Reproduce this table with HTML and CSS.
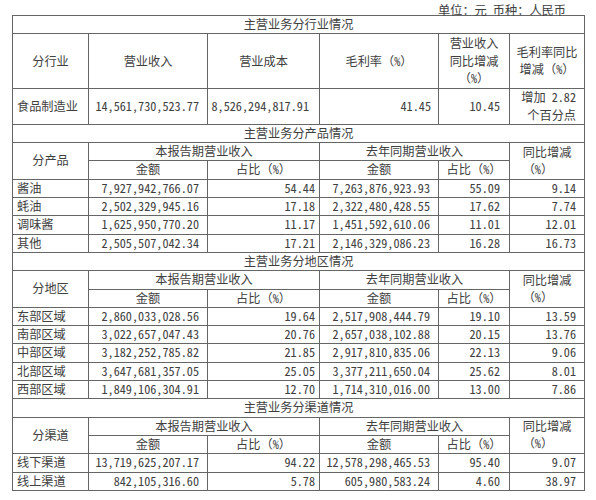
FILE: index.html
```html
<!DOCTYPE html>
<html lang="zh-CN">
<head>
<meta charset="utf-8">
<title>主营业务情况</title>
<link rel="stylesheet" href="styles.css">
</head>
<body>
<div class="page">
  <div class="unit">单位：元 币种：人民币</div>
  <table class="report">
    <colgroup>
      <col class="c1"><col class="c2"><col class="c3"><col class="c4"><col class="c5"><col class="c6">
    </colgroup>
    <tbody>
      <tr><td colspan="6" class="sec">主营业务分行业情况</td></tr>
      <tr class="hdr3">
        <td class="ctr">分行业</td>
        <td class="ctr">营业收入</td>
        <td class="ctr">营业成本</td>
        <td class="ctr">毛利率（%）</td>
        <td class="ctr">营业收入<br>同比增减<br>（%）</td>
        <td class="ctr">毛利率同比<br>增减（%）</td>
      </tr>
      <tr>
        <td class="lbl">食品制造业</td>
        <td class="num p8">14,561,730,523.77</td>
        <td class="num p10">8,526,294,817.91</td>
        <td class="num p7">41.45</td>
        <td class="num p9">10.45</td>
        <td class="num p8">增加 2.82<br>个百分点</td>
      </tr>

      <tr><td colspan="6" class="sec">主营业务分产品情况</td></tr>
      <tr>
        <td rowspan="2" class="ctr">分产品</td>
        <td colspan="2" class="ctr">本报告期营业收入</td>
        <td colspan="2" class="ctr">去年同期营业收入</td>
        <td rowspan="2" class="ctr"><span class="blk">同比增减<br>（%）</span></td>
      </tr>
      <tr>
        <td class="ctr">金额</td><td class="ctr">占比（%）</td>
        <td class="ctr">金额</td><td class="ctr">占比（%）</td>
      </tr>
      <tr><td class="lbl">酱油</td><td class="num p8">7,927,942,766.07</td><td class="num p4">54.44</td><td class="num p8">7,263,876,923.93</td><td class="num p9">55.09</td><td class="num p8">9.14</td></tr>
      <tr><td class="lbl">蚝油</td><td class="num p8">2,502,329,945.16</td><td class="num p4">17.18</td><td class="num p8">2,322,480,428.55</td><td class="num p9">17.62</td><td class="num p8">7.74</td></tr>
      <tr><td class="lbl">调味酱</td><td class="num p8">1,625,950,770.20</td><td class="num p4">11.17</td><td class="num p8">1,451,592,610.06</td><td class="num p9">11.01</td><td class="num p8">12.01</td></tr>
      <tr><td class="lbl">其他</td><td class="num p8">2,505,507,042.34</td><td class="num p4">17.21</td><td class="num p8">2,146,329,086.23</td><td class="num p9">16.28</td><td class="num p8">16.73</td></tr>

      <tr><td colspan="6" class="sec">主营业务分地区情况</td></tr>
      <tr>
        <td rowspan="2" class="ctr">分地区</td>
        <td colspan="2" class="ctr">本报告期营业收入</td>
        <td colspan="2" class="ctr">去年同期营业收入</td>
        <td rowspan="2" class="ctr"><span class="blk">同比增减<br>（%）</span></td>
      </tr>
      <tr>
        <td class="ctr">金额</td><td class="ctr">占比（%）</td>
        <td class="ctr">金额</td><td class="ctr">占比（%）</td>
      </tr>
      <tr><td class="lbl">东部区域</td><td class="num p8">2,860,033,028.56</td><td class="num p4">19.64</td><td class="num p8">2,517,908,444.79</td><td class="num p9">19.10</td><td class="num p8">13.59</td></tr>
      <tr><td class="lbl">南部区域</td><td class="num p8">3,022,657,047.43</td><td class="num p4">20.76</td><td class="num p8">2,657,038,102.88</td><td class="num p9">20.15</td><td class="num p8">13.76</td></tr>
      <tr><td class="lbl">中部区域</td><td class="num p8">3,182,252,785.82</td><td class="num p4">21.85</td><td class="num p8">2,917,810,835.06</td><td class="num p9">22.13</td><td class="num p8">9.06</td></tr>
      <tr><td class="lbl">北部区域</td><td class="num p8">3,647,681,357.05</td><td class="num p4">25.05</td><td class="num p8">3,377,211,650.04</td><td class="num p9">25.62</td><td class="num p8">8.01</td></tr>
      <tr><td class="lbl">西部区域</td><td class="num p8">1,849,106,304.91</td><td class="num p4">12.70</td><td class="num p8">1,714,310,016.00</td><td class="num p9">13.00</td><td class="num p8">7.86</td></tr>

      <tr><td colspan="6" class="sec">主营业务分渠道情况</td></tr>
      <tr>
        <td rowspan="2" class="ctr">分渠道</td>
        <td colspan="2" class="ctr">本报告期营业收入</td>
        <td colspan="2" class="ctr">去年同期营业收入</td>
        <td rowspan="2" class="ctr"><span class="blk">同比增减<br>（%）</span></td>
      </tr>
      <tr>
        <td class="ctr">金额</td><td class="ctr">占比（%）</td>
        <td class="ctr">金额</td><td class="ctr">占比（%）</td>
      </tr>
      <tr><td class="lbl">线下渠道</td><td class="num p8">13,719,625,207.17</td><td class="num p4">94.22</td><td class="num p8">12,578,298,465.53</td><td class="num p9">95.40</td><td class="num p8">9.07</td></tr>
      <tr><td class="lbl">线上渠道</td><td class="num p8">842,105,316.60</td><td class="num p4">5.78</td><td class="num p8">605,980,583.24</td><td class="num p9">4.60</td><td class="num p8">38.97</td></tr>
    </tbody>
  </table>
</div>
</body>
</html>
```

FILE: styles.css
```css
html, body {
  margin: 0;
  padding: 0;
  background: #ffffff;
}

.page {
  padding-left: 12px;
  font-family: "Noto Sans Mono CJK SC", "Noto Sans CJK SC", "Liberation Mono", monospace;
  font-size: 12.2px;
  color: #404040;
}

.unit {
  width: 554px;
  height: 15px;
  line-height: 20px;
  text-align: right;
  white-space: nowrap;
}

.report {
  border-collapse: collapse;
  table-layout: fixed;
  width: 572px;
}

.c1 { width: 76px; }
.c2 { width: 119px; }
.c3 { width: 112px; }
.c4 { width: 119px; }
.c5 { width: 71px; }
.c6 { width: 75px; }

.report td {
  border: 1px solid #666666;
  padding: 0;
  line-height: 17.3px;
  vertical-align: middle;
  white-space: nowrap;
  overflow: hidden;
}

.report .sec {
  text-align: center;
}

.report .ctr {
  text-align: center;
}

.report .lbl {
  text-align: left;
  padding-left: 4px;
}

.report .num {
  text-align: right;
}

.report .hdr3 td {
  height: 54px;
}

.blk {
  display: inline-block;
  text-align: left;
}

.report .p4 { padding-right: 4px; }
.report .p7 { padding-right: 7px; }
.report .p8 { padding-right: 8px; }
.report .p9 { padding-right: 9px; }
.report .p10 { padding-right: 10px; }
```
